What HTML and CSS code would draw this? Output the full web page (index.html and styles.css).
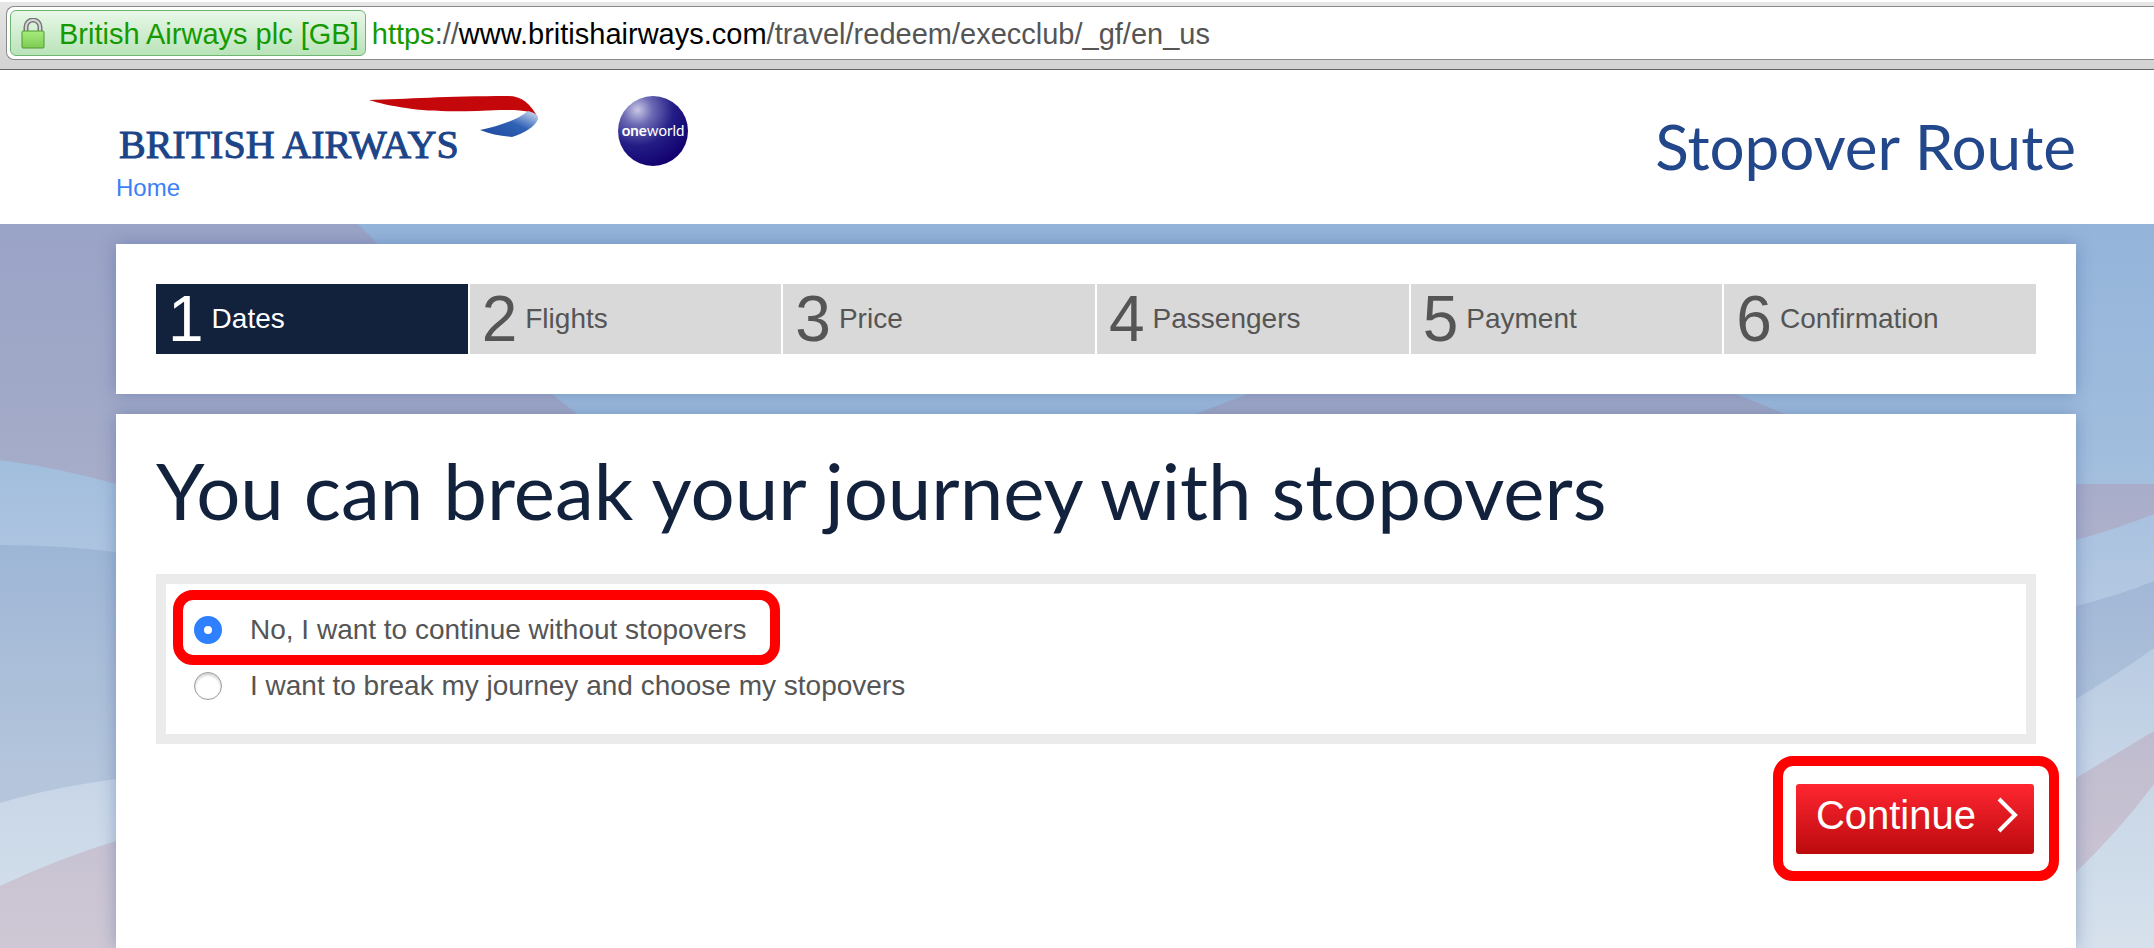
FILE: index.html
```html
<!DOCTYPE html>
<html lang="en">
<head>
    <meta charset="UTF-8">
    <meta name="viewport" content="width=device-width, initial-scale=1.0">
    <title>Stopover Route</title>
    <link rel="stylesheet" href="styles.css">
</head>
<body>
<div class="toolbar">
    <div class="address">
        <button class="site-id" type="button">
            <svg class="lock" width="24" height="32" viewBox="0 0 24 32" aria-hidden="true">
                <defs>
                    <linearGradient id="lockBody" x1="0" y1="0" x2="0" y2="1">
                        <stop offset="0" stop-color="#a6ec7c"/>
                        <stop offset="1" stop-color="#7dcb52"/>
                    </linearGradient>
                </defs>
                <path d="M5 13V9a7 7 0 0 1 14 0v4" fill="none" stroke="#777" stroke-width="5"/>
                <path d="M5 13V9a7 7 0 0 1 14 0v4" fill="none" stroke="#d8d8d8" stroke-width="2"/>
                <rect x="1" y="13" width="22" height="17" rx="1" fill="url(#lockBody)" stroke="#4f9a34" stroke-width="1"/>
            </svg>
            British Airways plc [GB]
        </button>
        <div class="url"><span class="scheme">https</span>://<span class="domain">www.britishairways.com</span>/travel/redeem/execclub/_gf/en_us</div>
    </div>
</div>

<header class="header">
    <div class="brand">
        <div class="logos">
            <svg class="ba-logo" width="424" height="72" viewBox="0 0 424 72" role="img" aria-label="British Airways">
                <defs>
                    <linearGradient id="ribbonBlue" x1="0" y1="1" x2="1" y2="0">
                        <stop offset="0" stop-color="#1d479c"/>
                        <stop offset="0.55" stop-color="#2f62b5"/>
                        <stop offset="1" stop-color="#d9e4f4"/>
                    </linearGradient>
                </defs>
                <text class="ba-name" x="3" y="62">BRITISH AIRWAYS</text>
                <path d="M253 4C290 3 330 0 392 0C406 0 415 8 422 22C416 15 408 14 384 14C345 16 312 16 290 12C276 10 262 7 253 4Z" fill="#c4070b"/>
                <path d="M412 15C419 17 422 19 422 23C419 31 408 37 396 41C384 40 374 38 364 34C382 30 400 25 412 15Z" fill="url(#ribbonBlue)"/>
            </svg>
            <svg class="oneworld" width="72" height="72" viewBox="0 0 72 72" role="img" aria-label="oneworld">
                <defs>
                    <radialGradient id="globe" cx="0.28" cy="0.2" r="0.85">
                        <stop offset="0" stop-color="#c9c8e6"/>
                        <stop offset="0.25" stop-color="#6d6ab4"/>
                        <stop offset="0.6" stop-color="#241d86"/>
                        <stop offset="1" stop-color="#12006f"/>
                    </radialGradient>
                </defs>
                <circle cx="36" cy="35" r="35" fill="url(#globe)"/>
                <text class="ow-name" x="36" y="40" text-anchor="middle"><tspan class="ow-one">one</tspan>world</text>
            </svg>
        </div>
        <a class="home" href="#home">Home</a>
    </div>
    <h1 class="page-title">Stopover Route</h1>
</header>

<main class="stage">
    <svg class="backdrop" viewBox="0 224 2154 724" preserveAspectRatio="none" aria-hidden="true">
        <g class="tint-red">
            <path d="M0 224H358L378 244L552 394L577 414L700 560L116 484Q60 468 0 460Z"/>
            <path d="M1195 414L1248 394Q1490 300 1736 394L1785 414L1785 560H1100Z"/>
            <path d="M1900 484H2154V514Q2116 529 2076 540L1900 580Z"/>
            <path d="M0 886Q60 858 116 841L300 790V948H0Z"/>
            <path d="M1900 860L2076 778L2154 731V784Q2118 832 2076 872L1980 948H1900Z"/>
        </g>
        <g class="tint-blue">
            <path d="M0 545Q60 545 116 552L400 600V740L116 779Q50 788 0 803Z"/>
            <path d="M1900 650L2076 606Q2120 595 2154 581V648Q2116 675 2076 699L1900 790Z"/>
        </g>
    </svg>

    <section class="panel">
        <ol class="steps">
            <li class="step active"><span class="num">1</span>Dates</li>
            <li class="step"><span class="num">2</span>Flights</li>
            <li class="step"><span class="num">3</span>Price</li>
            <li class="step"><span class="num">4</span>Passengers</li>
            <li class="step"><span class="num">5</span>Payment</li>
            <li class="step"><span class="num">6</span>Confirmation</li>
        </ol>
    </section>

    <form class="panel content">
        <h2>You can break your journey with stopovers</h2>
        <div class="options">
            <label class="option marked" for="no-stop">
                <input type="radio" id="no-stop" name="stopover" checked>
                No, I want to continue without stopovers
            </label>
            <label class="option" for="with-stop">
                <input type="radio" id="with-stop" name="stopover">
                I want to break my journey and choose my stopovers
            </label>
        </div>
        <div class="actions">
            <div class="marked">
                <button class="continue" type="button">
                    Continue
                    <svg width="22" height="36" viewBox="0 0 22 36" aria-hidden="true">
                        <path d="M3 2L19 18L3 34" fill="none" stroke="#fff" stroke-width="4"/>
                    </svg>
                </button>
            </div>
        </div>
    </form>
</main>
</body>
</html>
```

FILE: styles.css
```css
* {
    box-sizing: border-box;
}
body {
    font-family: "Liberation Sans", Arial, sans-serif;
    font-size: 28px;
    color: #555;
    background-color: #fff;
    margin: 0;
    min-height: 100vh;
    display: flex;
    flex-direction: column;
}

/* address bar */
.toolbar {
    background: linear-gradient(#e6e6e6, #d2d2d2);
    border-top: 2px solid #fff;
    border-bottom: 1px solid #666;
    padding: 4px 0 9px 6px;
    font-size: 29px;
}
.address {
    display: flex;
    align-items: center;
    gap: 6px;
    height: 54px;
    padding-left: 3px;
    background-color: #fff;
    border: 1px solid #8a8a8a;
    border-right: none;
    border-radius: 8px 0 0 8px;
    white-space: nowrap;
}
.site-id {
    display: flex;
    align-items: center;
    gap: 14px;
    height: 46px;
    padding: 2px 6px 0 10px;
    font: inherit;
    color: #149a00;
    background: linear-gradient(#e8f8e8, #b9e3b9);
    border: 1px solid #6fb572;
    border-radius: 6px;
}
.url {
    padding-top: 2px;
}
.scheme {
    color: #149a00;
}
.domain {
    color: #000;
}

/* header */
.header {
    display: flex;
    justify-content: space-between;
    height: 154px;
    padding: 26px 78px 0 116px;
}
.logos {
    display: flex;
    gap: 77px;
}
.ba-name {
    font-family: "Liberation Serif", serif;
    font-size: 40px;
    fill: #1c4488;
    stroke: #1c4488;
    stroke-width: 1px;
}
.ow-name {
    font-family: Lato, sans-serif;
    font-size: 15px;
    fill: #fff;
}
.ow-one {
    font-weight: 700;
}
.home {
    display: block;
    margin-top: 6px;
    font-size: 24px;
    line-height: 28px;
    color: #3b80f7;
    text-decoration: none;
}
.page-title {
    margin: 12px 0 0;
    font-family: Lato, "Open Sans", sans-serif;
    font-size: 62px;
    font-weight: 400;
    line-height: 76px;
    color: #22478a;
}

/* page body */
.stage {
    position: relative;
    flex: 1;
    display: flex;
    flex-direction: column;
    gap: 20px;
    padding: 20px 78px 0 116px;
    background: linear-gradient(#94b4da, #a0bddd 31%, #b4c8e2 52%, #c5d4e6 73%, #d6e1ec);
}
.backdrop {
    position: absolute;
    inset: 0;
    width: 100%;
    height: 100%;
}
.tint-red {
    fill: rgba(180, 99, 121, 0.2);
}
.tint-blue {
    fill: rgba(80, 110, 160, 0.16);
}
.panel {
    position: relative;
    padding: 40px;
    background-color: #fff;
    box-shadow: 0 0 16px rgba(60, 90, 150, 0.4);
}
.steps {
    display: flex;
    gap: 2px;
    margin: 0;
    padding: 0;
    list-style: none;
}
.step {
    flex: 1;
    display: flex;
    align-items: center;
    gap: 8px;
    height: 70px;
    padding-left: 12px;
    background-color: #d9d9d9;
}
.step.active {
    background-color: #12213c;
    color: #fff;
}
.num {
    font-size: 64px;
    line-height: 70px;
}
.content {
    flex: 1;
    padding-bottom: 0;
}
h2 {
    margin: 0 0 48px;
    font-family: Lato, "Open Sans", sans-serif;
    font-size: 78px;
    font-weight: 400;
    line-height: 72px;
    color: #12213c;
}
.options {
    display: flex;
    flex-direction: column;
    align-items: flex-start;
    gap: 28px;
    padding: 32px 28px 34px;
    border: 10px solid #ebebeb;
}
.option {
    display: flex;
    align-items: center;
    gap: 28px;
    line-height: 28px;
}
.option input {
    appearance: none;
    width: 28px;
    height: 28px;
    margin: 0;
    background-color: #fff;
    border: 1px solid #9a9a9a;
    border-radius: 50%;
    box-shadow: inset 0 2px 3px rgba(0, 0, 0, 0.2);
}
.option input:checked {
    border: 10px solid #2f80ff;
    box-shadow: none;
}
.actions {
    display: flex;
    justify-content: flex-end;
    padding: 40px 2px 0;
}
.continue {
    display: flex;
    align-items: center;
    gap: 20px;
    height: 70px;
    padding: 0 16px 8px 20px;
    font: inherit;
    font-size: 40px;
    color: #fff;
    background: linear-gradient(#ff2631, #bb0a0d);
    border: none;
    border-radius: 3px;
}

/* red highlight round a control */
.marked {
    position: relative;
}
.marked::after {
    content: "";
    position: absolute;
    inset: -28px -25px -27px -23px;
    border: 10px solid #f00;
    border-radius: 20px;
    pointer-events: none;
}
.option.marked::after {
    inset: -26px -33px -21px -21px;
}
```
